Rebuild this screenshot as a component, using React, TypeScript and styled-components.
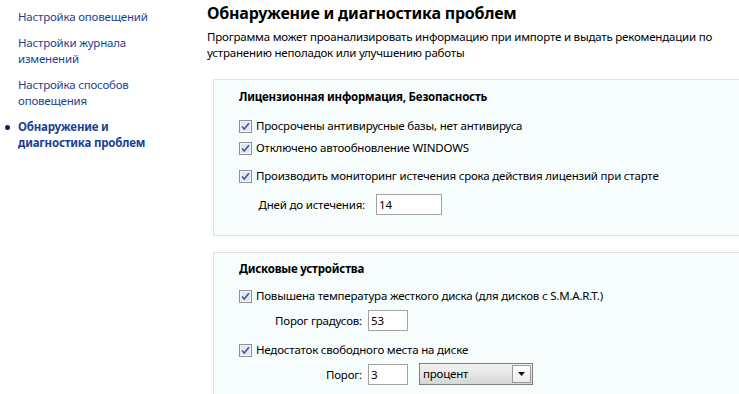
import styled, { createGlobalStyle } from 'styled-components';

const GlobalStyle = createGlobalStyle`
	html, body {
		margin: 0;
		padding: 0;
		background: #ffffff;
	}
	body {
		font-family: 'Noto Sans', 'DejaVu Sans', sans-serif;
		font-size: 11.5px;
		letter-spacing: -0.2px;
		color: #000;
	}
`;

const Page = styled.div`
	display: flex;
	width: 739px;
	height: 394px;
	overflow: hidden;
`;

const Sidebar = styled.ul`
	list-style: none;
	margin: 0;
	padding: 9px 0 0 18px;
	width: 189px;
	flex-shrink: 0;
	display: flex;
	flex-direction: column;
	gap: 10px;
`;

const NavItem = styled.li<{ $active?: boolean }>`
	position: relative;
	line-height: 16px;
	color: #1c3f94;
	font-weight: ${(p) => (p.$active ? 700 : 400)};

	&::before {
		content: '';
		display: ${(p) => (p.$active ? 'block' : 'none')};
		position: absolute;
		left: -13px;
		top: 6px;
		width: 5px;
		height: 5px;
		border-radius: 50%;
		background: #1a1f5c;
	}
`;

const Main = styled.div`
	flex: 1;
	min-width: 0;
	overflow: hidden;
`;

const Title = styled.h1`
	margin: 2px 0 0;
	font-size: 16px;
	line-height: 22px;
	font-weight: 700;
	letter-spacing: -0.2px;
`;

const Description = styled.p`
	margin: 5px 0 0;
	line-height: 16px;
	width: 515px;
`;

const Panel = styled.section<{ $top: number; $padTop: number; $padBottom: number }>`
	margin: ${(p) => p.$top}px -20px 0 6px;
	padding: ${(p) => p.$padTop}px 0 ${(p) => p.$padBottom}px 25px;
	background: #f7fdfd;
	border: 1px solid #e1e3e3;
	display: flex;
	flex-direction: column;
`;

const PanelHeader = styled.h2`
	margin: 0;
	font-size: 11.5px;
	line-height: 16px;
	font-weight: 700;
`;

const CheckRow = styled.label<{ $mt: number }>`
	display: flex;
	align-items: center;
	gap: 4px;
	line-height: 16px;
	margin-top: ${(p) => p.$mt}px;
	white-space: nowrap;
`;

const FieldRow = styled.div<{ $mt: number; $labelWidth: number; $gap: number }>`
	display: flex;
	align-items: center;
	margin-top: ${(p) => p.$mt}px;
	white-space: nowrap;

	& > span {
		width: ${(p) => p.$labelWidth}px;
		margin-right: ${(p) => p.$gap}px;
		text-align: right;
	}
`;

const TextInput = styled.div<{ $width: number }>`
	box-sizing: border-box;
	width: ${(p) => p.$width}px;
	height: 21px;
	border: 1px solid #a3a3a3;
	background: #fff;
	padding: 0 2px;
	line-height: 19px;
`;

const Select = styled.div`
	box-sizing: border-box;
	margin-left: 11px;
	width: 114px;
	height: 22px;
	border: 1px solid #7f7f7f;
	background: linear-gradient(#f3f3f3, #e6e6e6 50%, #d6d6d6);
	display: flex;
	align-items: center;
	justify-content: space-between;
	padding-left: 3px;
	line-height: 20px;
`;

const SelectButton = styled.div`
	box-sizing: border-box;
	width: 19px;
	height: 18px;
	margin-right: 1px;
	border: 1px solid #9a9a9a;
	background: linear-gradient(#ffffff, #ececec);
	display: flex;
	align-items: center;
	justify-content: center;
`;

function CheckBox() {
	return (
		<svg width="13" height="13" viewBox="0 0 13 13">
			<rect x="0.5" y="0.5" width="12" height="12" fill="#f4f4f4" stroke="#8f8f8f" />
			<rect x="2" y="2" width="9" height="9" fill="#dfe7f1" />
			<path d="M3 6.5 L5.2 9 L10 3.2" fill="none" stroke="#3b5aa6" strokeWidth="1.6" />
		</svg>
	);
}

export default function App() {
	return (
		<>
			<GlobalStyle />
			<Page>
				<Sidebar>
					<NavItem>Настройка оповещений</NavItem>
					<NavItem>
						Настройки журнала
						<br />
						изменений
					</NavItem>
					<NavItem>
						Настройка способов
						<br />
						оповещения
					</NavItem>
					<NavItem $active>
						Обнаружение и
						<br />
						диагностика проблем
					</NavItem>
				</Sidebar>

				<Main>
					<Title>Обнаружение и диагностика проблем</Title>
					<Description>
						Программа может проанализировать информацию при импорте и выдать рекомендации по
						устранению неполадок или улучшению работы
					</Description>

					<Panel $top={18} $padTop={9} $padBottom={20}>
						<PanelHeader>Лицензионная информация, Безопасность</PanelHeader>
						<CheckRow $mt={13}>
							<CheckBox />
							Просрочены антивирусные базы, нет антивируса
						</CheckRow>
						<CheckRow $mt={6}>
							<CheckBox />
							Отключено автообновление WINDOWS
						</CheckRow>
						<CheckRow $mt={12}>
							<CheckBox />
							Производить мониторинг истечения срока действия лицензий при старте
						</CheckRow>
						<FieldRow $mt={10} $labelWidth={126} $gap={11}>
							<span>Дней до истечения:</span>
							<TextInput $width={66}>14</TextInput>
						</FieldRow>
					</Panel>

					<Panel $top={16} $padTop={8} $padBottom={20}>
						<PanelHeader>Дисковые устройства</PanelHeader>
						<CheckRow $mt={11}>
							<CheckBox />
							Повышена температура жесткого диска (для дисков с S.M.A.R.T.)
						</CheckRow>
						<FieldRow $mt={6} $labelWidth={123} $gap={6}>
							<span>Порог градусов:</span>
							<TextInput $width={40}>53</TextInput>
						</FieldRow>
						<CheckRow $mt={11}>
							<CheckBox />
							Недостаток свободного места на диске
						</CheckRow>
						<FieldRow $mt={5} $labelWidth={123} $gap={6}>
							<span>Порог:</span>
							<TextInput $width={40}>3</TextInput>
							<Select>
								процент
								<SelectButton>
									<svg width="7" height="4" viewBox="0 0 7 4">
										<path d="M0 0 H7 L3.5 4 Z" fill="#111" />
									</svg>
								</SelectButton>
							</Select>
						</FieldRow>
					</Panel>
				</Main>
			</Page>
		</>
	);
}
